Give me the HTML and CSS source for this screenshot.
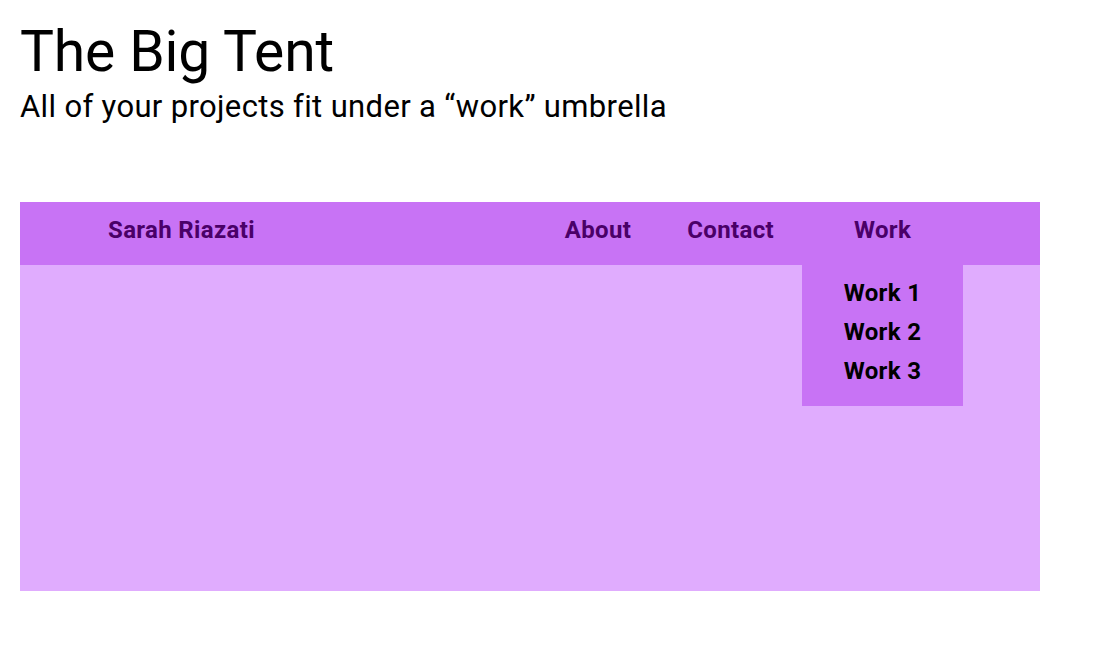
FILE: index.html
```html
<!DOCTYPE html>
<html lang="en">
<head>
<meta charset="utf-8">
<title>The Big Tent</title>
<link rel="stylesheet" href="styles.css">
</head>
<body>
<header class="intro">
  <h1 class="title">The Big Tent</h1>
  <p class="subtitle">All of your projects fit under a “work” umbrella</p>
</header>
<div class="frame">
  <nav class="nav">
    <a class="brand" href="#">Sarah Riazati</a>
    <ul class="links">
      <li class="link"><a href="#">About</a></li>
      <li class="link"><a href="#">Contact</a></li>
      <li class="link work">
        <a href="#">Work</a>
        <ul class="dropdown">
          <li><a href="#">Work 1</a></li>
          <li><a href="#">Work 2</a></li>
          <li><a href="#">Work 3</a></li>
        </ul>
      </li>
    </ul>
  </nav>
  <div class="content"></div>
</div>
</body>
</html>
```
FILE: styles.css
```css
* { box-sizing: border-box; }
body {
  margin: 0;
  padding: 19px 20px 0;
  font-family: Roboto, "Liberation Sans", sans-serif;
  color: #000;
  background: #fff;
}
.title {
  margin: 0;
  font-size: 57px;
  font-weight: 400;
  line-height: 66px;
  letter-spacing: -0.15px;
}
.subtitle {
  margin: 4px 0 0;
  font-size: 31px;
  letter-spacing: 0.35px;
  line-height: 36px;
}
.frame {
  margin-top: 77px;
  width: 1020px;
  background: #e0acfe;
  height: 389px;
  display: flex;
  flex-direction: column;
}
.nav {
  display: flex;
  align-items: center;
  height: 63px;
  background: #c873f5;
  padding-left: 88px;
  padding-right: 77px;
  font-size: 24px;
  font-weight: 700;
  letter-spacing: 0.35px;
}
.nav a {
  text-decoration: none;
  color: #4a0068;
}
.brand { margin-right: auto; line-height: 28px; margin-bottom: 7px; }
.links {
  display: flex;
  list-style: none;
  margin: 0;
  padding: 0;
  height: 100%;
}
.link {
  display: flex;
  align-items: center;
  padding: 0 28px 7px;
  position: relative;
}
.work {
  width: 161px;
  justify-content: center;
  padding: 0 0 7px;
}
.dropdown {
  position: absolute;
  top: 63px;
  left: 0;
  width: 161px;
  margin: 0;
  padding: 9px 0 15px;
  list-style: none;
  background: #c873f5;
  text-align: center;
}
.dropdown li { line-height: 39px; }
.dropdown a { color: #000; }
.content { flex: 1; }
```
